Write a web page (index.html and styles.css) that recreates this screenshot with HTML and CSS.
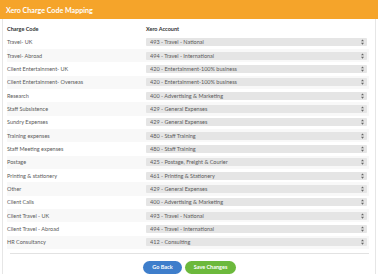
FILE: index.html
```html
<!DOCTYPE html>
<html lang="en">
<head>
    <meta charset="UTF-8">
    <title>Xero Charge Code Mapping</title>
    <link rel="stylesheet" href="styles.css">
</head>
<body>
    <div class="panel">
        <div class="panel-title">Xero Charge Code Mapping</div>
        <div class="panel-body">
            <table class="mapping">
                <thead>
                    <tr><th>Charge Code</th><th>Xero Account</th></tr>
                </thead>
                <tbody id="rows"></tbody>
            </table>
            <div class="actions">
                <button class="btn btn-back">Go Back</button>
                <button class="btn btn-save">Save Changes</button>
            </div>
        </div>
    </div>

    <script>
const mappings = [
    ['Travel- UK', '493 - Travel - National'],
    ['Travel- Abroad', '494 - Travel - International'],
    ['Client Entertainment- UK', '420 - Entertainment-100% business'],
    ['Client Entertainment- Overseas', '420 - Entertainment-100% business'],
    ['Research', '400 - Advertising & Marketing'],
    ['Staff Subsistence', '429 - General Expenses'],
    ['Sundry Expenses', '429 - General Expenses'],
    ['Training expenses', '480 - Staff Training'],
    ['Staff Meeting expenses', '480 - Staff Training'],
    ['Postage', '425 - Postage, Freight & Courier'],
    ['Printing & stationery', '461 - Printing & Stationery'],
    ['Other', '429 - General Expenses'],
    ['Client Calls', '400 - Advertising & Marketing'],
    ['Client Travel - UK', '493 - Travel - National'],
    ['Client Travel - Abroad', '494 - Travel - International'],
    ['HR Consultancy', '412 - Consulting']
];

const tbody = document.getElementById('rows');
const arrow = '<svg class="arrow" viewBox="0 0 4 7" width="3" height="6"><path d="M2 0 L4 2.6 H0 Z M2 7 L4 4.4 H0 Z" fill="#666"/></svg>';

mappings.forEach(([code, account]) => {
    const row = document.createElement('tr');
    row.innerHTML = `<td>${code}</td><td><span class="select"><select><option>${account}</option></select>${arrow}</span></td>`;
    tbody.appendChild(row);
});
    </script>
</body>
</html>
```

FILE: styles.css
```css
body {
    margin: 0;
    background-color: #fff;
    font-family: Lato, "Open Sans", sans-serif;
    color: #5a5a5a;
}
.panel {
    width: 378px;
}
.panel-title {
    height: 19px;
    line-height: 21px;
    padding-left: 6px;
    background-color: #f5a42a;
    color: #fff;
    font-size: 7.1px;
    font-weight: bold;
}
.panel-body {
    margin: 0 2px;
    padding: 3.5px 6px 0 4px;
    border-left: 1px solid #e6e6e6;
    border-right: 1px solid #e6e6e6;
}
.mapping {
    width: 100%;
    border-collapse: collapse;
}
.mapping th,
.mapping td {
    height: 13.33px;
    padding: 0;
    text-align: left;
    font-size: 5.5px;
    vertical-align: middle;
}
.mapping th {
    color: #333;
    font-weight: bold;
}
.mapping th:first-child,
.mapping td:first-child {
    width: 139px;
}
.mapping tbody tr:nth-child(even) {
    background-color: #f8f8f8;
}
.select {
    position: relative;
    display: block;
    width: 221px;
}
.select select {
    display: block;
    width: 100%;
    height: 8px;
    padding: 0 0 0 4px;
    border: none;
    border-radius: 1px;
    background-color: #e5e5e5;
    color: #5a5a5a;
    font-family: Lato, "Open Sans", sans-serif;
    font-size: 5.5px;
    line-height: 8px;
    appearance: none;
    -webkit-appearance: none;
}
.arrow {
    position: absolute;
    right: 3px;
    top: 1px;
}
.actions {
    display: flex;
    justify-content: center;
    gap: 3px;
    margin-top: 4px;
    margin-left: 3px;
    padding-top: 6.5px;
    border-top: 1px solid #e2e2e2;
}
.btn {
    height: 13px;
    padding: 0;
    border: none;
    border-radius: 7px;
    color: #fff;
    font-family: Lato, "Open Sans", sans-serif;
    font-size: 5.5px;
    font-weight: bold;
    white-space: nowrap;
}
.btn-back {
    width: 39px;
    background-color: #3e7ecb;
}
.btn-save {
    width: 51px;
    background-color: #6cb93c;
}
```
